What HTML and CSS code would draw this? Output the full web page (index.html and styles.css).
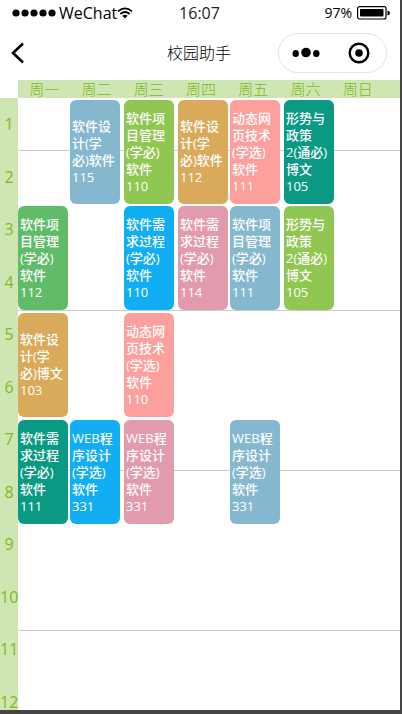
FILE: index.html
```html
<!DOCTYPE html>
<html lang="zh-CN">
<head>
<meta charset="utf-8">
<meta name="viewport" content="width=device-width, initial-scale=1">
<title>校园助手</title>
<link rel="stylesheet" href="styles.css">
</head>
<body>
<div class="phone">
  <header>
    <div class="status">
      <div class="carrier">
        <svg class="signal" width="44" height="10" viewBox="0 0 44 10" aria-hidden="true"><circle cx="4" cy="5" r="3.6"/><circle cx="13" cy="5" r="3.6"/><circle cx="22" cy="5" r="3.6"/><circle cx="31" cy="5" r="3.6"/><circle cx="40" cy="5" r="3.6"/></svg>
        <span class="network">WeChat</span>
        <svg width="16" height="12" viewBox="0 0 16 12" aria-hidden="true"><path d="M1 4.4Q8-1.6 15 4.4M3.4 7Q8 3 12.6 7" fill="none" stroke="#000" stroke-width="1.8"/><path d="M5.4 8.8Q8 6.8 10.6 8.8L8 11.6Z"/></svg>
      </div>
      <time class="clock">16:07</time>
      <div class="power">
        <span>97%</span>
        <svg width="34" height="14" viewBox="0 0 34 14" aria-hidden="true"><rect x=".6" y=".6" width="28.4" height="12.4" rx="2" fill="none" stroke="#000" stroke-width="1.2"/><rect x="3" y="3" width="23.5" height="7.5" rx="1"/><path d="M30.5 4.5Q33 5 33 7T30.5 9.5Z"/></svg>
      </div>
    </div>
    <nav class="nav">
      <button class="back" aria-label="返回"><svg width="14" height="22" viewBox="0 0 14 22"><path d="M12 1.5L2 11L12 20.5" fill="none" stroke="#000" stroke-width="2.6"/></svg></button>
      <h1>校园助手</h1>
      <div class="capsule">
        <button aria-label="更多"><svg width="28" height="12" viewBox="0 0 28 12"><ellipse cx="3.7" cy="6.5" rx="3.2" ry="3.5"/><circle cx="14" cy="5.5" r="4.8"/><ellipse cx="24.3" cy="6.5" rx="3.2" ry="3.5"/></svg></button>
        <button aria-label="关闭"><svg width="22" height="22" viewBox="0 0 22 22"><circle cx="11" cy="11" r="9.3" fill="none" stroke="#000" stroke-width="2.4"/><circle cx="11" cy="11" r="3.8"/></svg></button>
      </div>
    </nav>
  </header>
  <div class="week"><span>周一</span><span>周二</span><span>周三</span><span>周四</span><span>周五</span><span>周六</span><span>周日</span></div>
  <main class="timetable">
    <div class="periods"><span>1</span><span>2</span><span>3</span><span>4</span><span>5</span><span>6</span><span>7</span><span>8</span><span>9</span><span>10</span><span>11</span><span>12</span></div>
    <div class="lessons">
      <div class="lesson tue p1 blue">软件设<br>计(学<br>必)软件<br>115</div>
      <div class="lesson wed p1 lime">软件项<br>目管理<br>(学必)<br>软件<br>110</div>
      <div class="lesson thu p1 gold">软件设<br>计(学<br>必)软件<br>112</div>
      <div class="lesson fri p1 coral">动态网<br>页技术<br>(学选)<br>软件<br>111</div>
      <div class="lesson sat p1 teal">形势与<br>政策<br>2(通必)<br>博文<br>105</div>
      <div class="lesson mon p3 green">软件项<br>目管理<br>(学必)<br>软件<br>112</div>
      <div class="lesson wed p3 azure">软件需<br>求过程<br>(学必)<br>软件<br>110</div>
      <div class="lesson thu p3 pink">软件需<br>求过程<br>(学必)<br>软件<br>114</div>
      <div class="lesson fri p3 blue">软件项<br>目管理<br>(学必)<br>软件<br>111</div>
      <div class="lesson sat p3 lime">形势与<br>政策<br>2(通必)<br>博文<br>105</div>
      <div class="lesson mon p5 gold">软件设<br>计(学<br>必)博文<br>103</div>
      <div class="lesson wed p5 coral">动态网<br>页技术<br>(学选)<br>软件<br>110</div>
      <div class="lesson mon p7 teal">软件需<br>求过程<br>(学必)<br>软件<br>111</div>
      <div class="lesson tue p7 azure">WEB程<br>序设计<br>(学选)<br>软件<br>331</div>
      <div class="lesson wed p7 pink">WEB程<br>序设计<br>(学选)<br>软件<br>331</div>
      <div class="lesson fri p7 blue">WEB程<br>序设计<br>(学选)<br>软件<br>331</div>
    </div>
  </main>
</div>
</body>
</html>
```

FILE: styles.css
```css
* { box-sizing: border-box; }

body {
  margin: 0;
  padding: 0 2px 4px 0;
  background: #444446;
  color: #000;
  font-family: "Open Sans", "Noto Sans CJK SC", sans-serif;
}

.phone {
  display: flex;
  flex-direction: column;
  height: calc(100vh - 4px);
  overflow: hidden;
  background: #fff;
}

header { flex: none; }

button {
  display: flex;
  align-items: center;
  justify-content: center;
  padding: 0;
  border: 0;
  background: none;
}

.status,
.nav {
  display: grid;
  grid-template-columns: 1fr auto 1fr;
  align-items: center;
}

.status {
  height: 26px;
  padding: 0 9px 0 12px;
  font-size: 16px;
  line-height: 26px;
}

.clock {
  padding-right: 4px;
  color: #222;
}

.carrier,
.power {
  display: flex;
  align-items: center;
}

.signal { margin-right: 3px; }

.power {
  justify-content: flex-end;
  gap: 5px;
  font-size: 14px;
}

.nav {
  height: 54px;
  padding: 0 13px 0 11px;
}

.nav h1 {
  margin: 0;
  font-size: 16px;
  font-weight: 300;
  line-height: 24px;
}

.back { justify-self: start; }

.capsule {
  display: grid;
  grid-template-columns: 1fr 1fr;
  justify-self: end;
  width: 109px;
  height: 40px;
  border: 1px solid #e3e3e3;
  border-radius: 20px;
}

.week {
  display: grid;
  flex: none;
  grid-template-columns: repeat(7, 1fr);
  height: 18px;
  margin-left: 18px;
  padding-right: 16px;
  background: #d0e6b2;
  color: #7cba23;
  font-size: 15px;
  font-weight: 300;
  line-height: 18px;
  text-align: center;
}

.timetable {
  display: grid;
  flex: 1;
  grid-template-columns: 18px 1fr;
  min-height: 0;
}

.periods {
  display: grid;
  grid-template-rows: repeat(6, 52px 53px);
  align-items: center;
  justify-items: center;
  background: #d0e6b2;
  color: #7cba23;
  font-size: 16px;
  line-height: 16px;
}

.lessons {
  display: grid;
  grid-template-columns: 52fr 54fr 54fr 52fr 54fr 52fr 64fr;
  grid-template-rows: 106px 107px 107px 106px;
  padding-top: 2px;
  background: linear-gradient(transparent 52px, #ccc 52px, #ccc 53px, transparent 53px) 0 0 / 100% 160px;
}

.lesson {
  display: flow-root;
  align-content: center;
  width: 50px;
  height: 104px;
  padding: 0 2px;
  border-radius: 6px;
  color: #fff;
  font-size: 13px;
  font-weight: 500;
  line-height: 17px;
  white-space: nowrap;
}

.mon { grid-column: 1; }
.tue { grid-column: 2; }
.wed { grid-column: 3; }
.thu { grid-column: 4; }
.fri { grid-column: 5; }
.sat { grid-column: 6; }

.p1 { grid-row: 1; }
.p3 { grid-row: 2; }
.p5 { grid-row: 3; }
.p7 { grid-row: 4; }

.blue { background: #85b8cf; }
.lime { background: #90c652; }
.gold { background: #d8aa5a; }
.coral { background: #fc9f9d; }
.teal { background: #0a9a84; }
.green { background: #61bc69; }
.azure { background: #12aef3; }
.pink { background: #e29aad; }
```
